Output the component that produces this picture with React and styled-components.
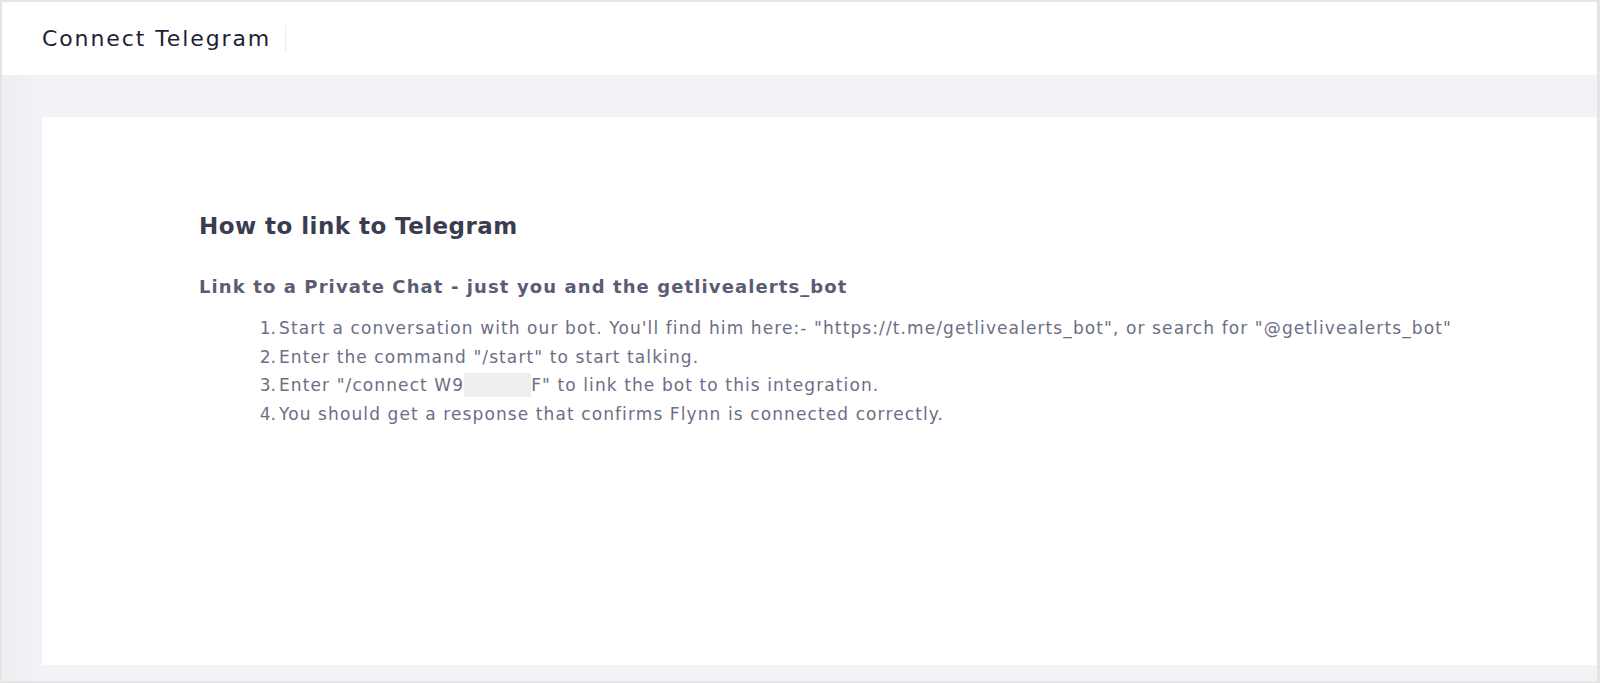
import React from 'react';
import styled, { createGlobalStyle } from 'styled-components';

const GlobalStyle = createGlobalStyle`
  html, body {
    margin: 0;
    padding: 0;
    background: #ffffff;
  }
  * {
    box-sizing: border-box;
  }
`;

const Frame = styled.div`
  height: 683px;
  display: flex;
  flex-direction: column;
  border: 2px solid #e4e4e4;
  border-right-width: 3px;
  font-family: 'DejaVu Sans', 'Open Sans', sans-serif;
  background: #eef1f5;
`;

const TopBar = styled.header`
  height: 73px;
  flex-shrink: 0;
  background: #ffffff;
  display: flex;
  align-items: center;
  padding-left: 40px;
`;

const PageTitle = styled.h1`
  margin: 0;
  padding-right: 14px;
  font-size: 22px;
  font-weight: 400;
  letter-spacing: 1.9px;
  color: #1e1f35;
  line-height: 27px;
  border-right: 1px solid #ececef;
`;

const Main = styled.main`
  flex: 1;
  display: flex;
  padding: 42px 0 16px 40px;
  background: linear-gradient(90deg, #eceef2 0px, #f1f3f6 40px);
`;

const Card = styled.section`
  flex: 1;
  background: #ffffff;
  padding: 92px 0 0 157px;
`;

const Heading = styled.h2`
  margin: 0 0 30px;
  font-size: 23px;
  font-weight: 700;
  letter-spacing: 0.45px;
  color: #3a3c50;
  line-height: 34px;
`;

const SubHeading = styled.h3`
  margin: 0 0 13px;
  font-size: 18px;
  font-weight: 700;
  letter-spacing: 1.1px;
  color: #5a5c73;
  line-height: 28px;
`;

const Steps = styled.ol`
  margin: 0;
  padding-left: 77px;
  list-style: none;
  counter-reset: step;
  font-size: 17px;
  letter-spacing: 1.1px;
  color: #6c6e86;
  line-height: 28.7px;
`;

const Step = styled.li`
  counter-increment: step;

  &::before {
    content: counter(step) ".";
    display: inline-block;
    width: 20px;
    margin-left: -20px;
    padding-right: 3px;
    text-align: right;
    letter-spacing: 0;
  }
`;

const Redacted = styled.span`
  display: inline-block;
  width: 67px;
  height: 24px;
  vertical-align: -6px;
  background: #efefef;
`;

const App = () => (
  <>
    <GlobalStyle />
    <Frame>
      <TopBar>
        <PageTitle>Connect Telegram</PageTitle>
      </TopBar>
      <Main>
        <Card>
          <Heading>How to link to Telegram</Heading>
          <SubHeading>Link to a Private Chat - just you and the getlivealerts_bot</SubHeading>
          <Steps>
            <Step>Start a conversation with our bot. You'll find him here:- "https://t.me/getlivealerts_bot", or search for "@getlivealerts_bot"</Step>
            <Step>Enter the command "/start" to start talking.</Step>
            <Step>Enter "/connect W9<Redacted />F" to link the bot to this integration.</Step>
            <Step>You should get a response that confirms Flynn is connected correctly.</Step>
          </Steps>
        </Card>
      </Main>
    </Frame>
  </>
);

export default App;
